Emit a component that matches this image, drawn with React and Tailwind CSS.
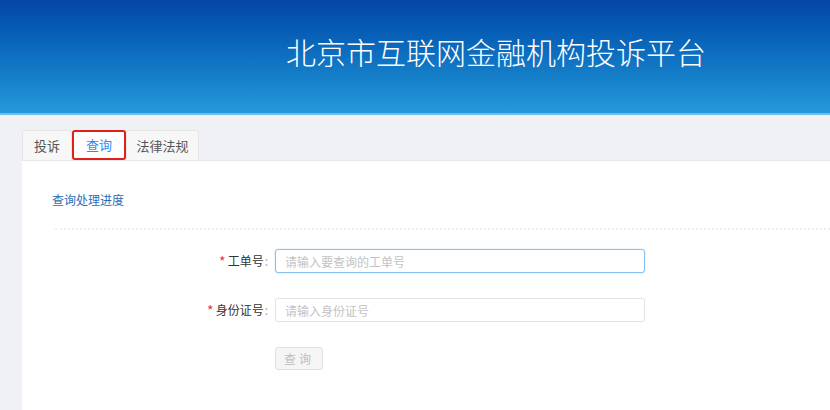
import React from 'react'

const font = { fontFamily: '"Noto Sans CJK SC", "Noto Sans", sans-serif' }

function Tabs() {
  return (
    <div className="flex h-[30px] items-stretch text-[13px]">
      <div className="flex w-[50px] items-center justify-center rounded-t-[3px] border border-b-0 border-[#e6e6e6] bg-[#f7f7f7] text-[#555]">
        投诉
      </div>
      <div className="flex w-[54px] items-center justify-center rounded-[3px] border-2 border-[#e0201b] bg-white text-[#2d8cf0]">
        查询
      </div>
      <div className="flex w-[73px] items-center justify-center rounded-t-[3px] border border-b-0 border-[#e6e6e6] bg-[#f7f7f7] text-[#555]">
        法律法规
      </div>
    </div>
  )
}

function Row({ label, placeholder, focused }) {
  return (
    <div className="grid grid-cols-[216px_370px] items-center gap-x-[7px]">
      <div className="flex items-center justify-end text-[12px] text-[#333]">
        <span className="mr-[2px] text-[14px] leading-none text-[#e53935]">*</span>
        <span>{label}</span>
        <span className="ml-[1px] text-[#aaa]">:</span>
      </div>
      <input
        placeholder={placeholder}
        className={`h-[24px] rounded-[3px] border bg-white px-[9px] text-[12px] outline-none placeholder:text-[#c3c3c3] ${
          focused ? 'border-[#86c1f4] shadow-[0_0_2px_rgba(45,140,240,0.3)]' : 'border-[#e2e2e2]'
        }`}
      />
    </div>
  )
}

export default function App() {
  return (
    <div className="h-[410px] w-[830px] overflow-hidden bg-[#f0f1f5]" style={font}>
      <div className="flex h-[113px] items-center bg-gradient-to-b from-[#0546a6] to-[#2499da] pb-[12px] pl-[286px]">
        <h1 className="text-[30px] font-light leading-none text-white">北京市互联网金融机构投诉平台</h1>
      </div>
      <div className="h-[2px] bg-[#6cbdec]" />

      <div className="pl-[22px] pt-[15px]">
        <Tabs />
        <div className="h-[260px] border-t border-[#e8e8e8] bg-white pl-[30px] pt-[30px]">
          <div className="text-[12px] leading-[18px] text-[#2a6db5]">查询处理进度</div>
          <div className="ml-[3px] mt-[19px] border-t-2 border-dotted border-[#f0f0f0]" />

          <div className="mt-[19px] flex flex-col gap-[25px]">
            <Row label="工单号" placeholder="请输入要查询的工单号" focused />
            <Row label="身份证号" placeholder="请输入身份证号" />
            <div className="grid grid-cols-[216px_370px] gap-x-[7px]">
              <div />
              <button className="h-[23px] w-[48px] rounded-[3px] border border-[#e0e0e0] bg-[#f5f5f5] text-[12px] tracking-[3px] text-[#bdbdbd]">
                查询
              </button>
            </div>
          </div>
        </div>
      </div>
    </div>
  )
}
